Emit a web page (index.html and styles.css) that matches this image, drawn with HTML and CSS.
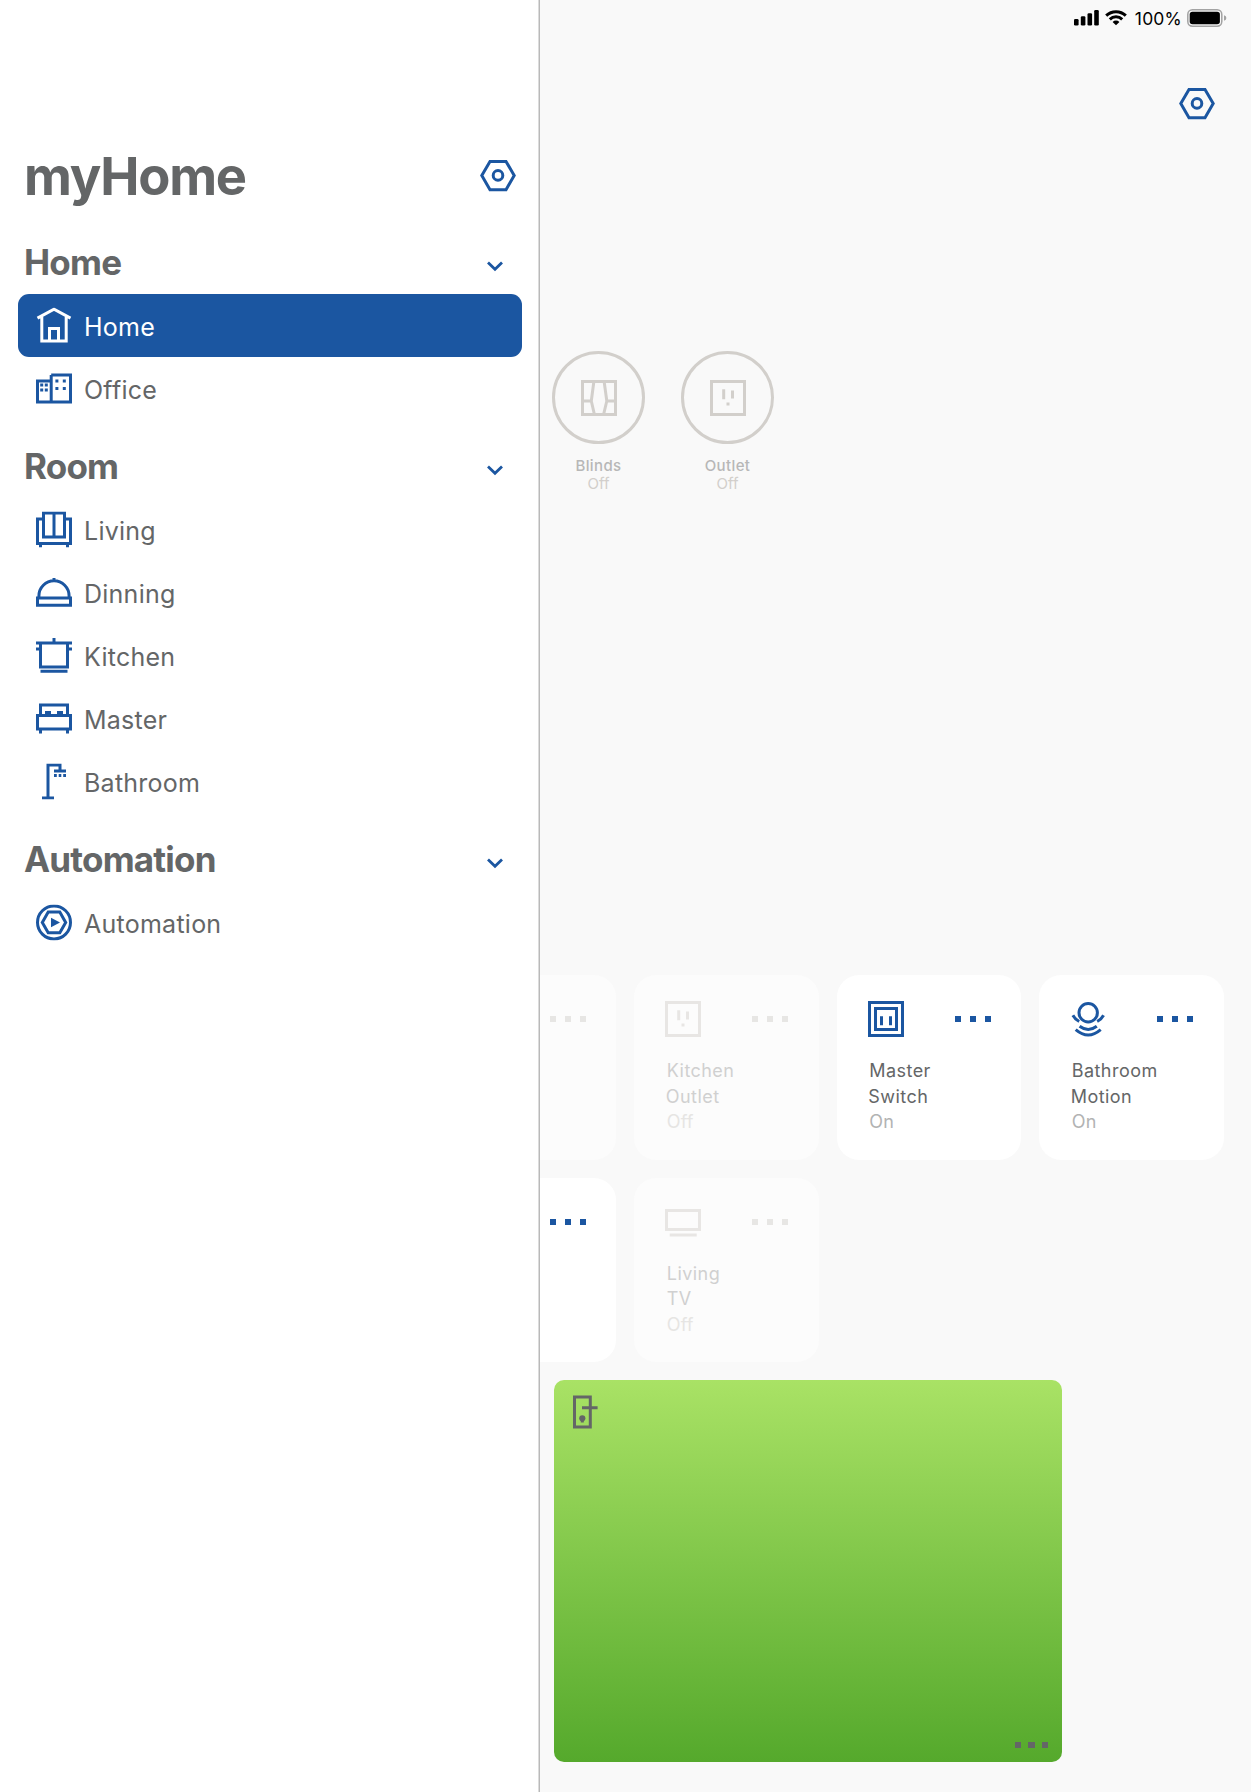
FILE: index.html
```html
<!DOCTYPE html>
<html lang="en">
<head>
<meta charset="utf-8">
<title>myHome</title>
<link rel="stylesheet" href="styles.css">
</head>
<body>
<svg class="sprite" aria-hidden="true">
  <symbol id="gear" viewBox="0 0 36 36"><path d="M1.8 18 10 4H26L34.2 18 26 32.3H10Z"/><circle cx="18" cy="18" r="4.8"/></symbol>
  <symbol id="chevron" viewBox="0 0 18 12"><path d="M2 2.5 9 9.2 16 2.5"/></symbol>
  <symbol id="outlet" viewBox="0 0 36 36"><path d="M1.5 1.5H34.5V34.5H1.5ZM13.7 9.3V19.3M22.5 10.5V18.5M16.5 24H19.5"/></symbol>
</svg>
<div class="app">
  <aside class="sidebar">
    <header class="brand">
      <h1>myHome</h1>
      <svg class="icon"><use href="#gear"/></svg>
    </header>

    <section>
      <div class="group"><h2>Home</h2><svg class="chevron"><use href="#chevron"/></svg></div>
      <ul>
        <li class="item active">
          <svg class="icon" viewBox="0 0 36 36"><path d="M1.5 10.7 18 1.9 34.5 10.7M5.8 9.5V33.5H30.2V9.5M13.5 33V21H22.5V33"/></svg><span>Home</span>
        </li>
        <li class="item">
          <svg class="icon" viewBox="0 0 36 36"><path d="M15.2 4.5H34.5V31.7H1.5V10.5H15.2M15.2 4.5V31.7"/><path class="fill" d="M4.2 13.2h3v3h-3zM8.8 13.2h3v3h-3zM4.2 18h3v3h-3zM8.8 18h3v3h-3zM19.4 9.2h3v3h-3zM26.8 9.2h3v3h-3zM19.4 16.5h3v3h-3zM26.8 16.5h3v3h-3z"/></svg><span>Office</span>
        </li>
      </ul>
    </section>

    <section>
      <div class="group"><h2>Room</h2><svg class="chevron"><use href="#chevron"/></svg></div>
      <ul>
        <li class="item">
          <svg class="icon" viewBox="0 0 36 36"><path d="M7.5 1.5H28.5V25.7H7.5ZM18 2V26M6 7.5H1.5V32.2H34.5V7.5H30M4.5 32V36M31.5 32V36"/></svg><span>Living</span>
        </li>
        <li class="item">
          <svg class="icon" viewBox="0 0 36 36"><path d="M1.5 23.5H34.5V30.8H1.5ZM2.9 23V21.5A15.1 15.1 0 0 1 33.1 21.5V23M18 3.5V7"/></svg><span>Dinning</span>
        </li>
        <li class="item">
          <svg class="icon" viewBox="0 0 36 36"><path d="M0 5.5H36M4.5 5.5V29.5H31.5V5.5M18 .7V5M0 11.7H4M32 11.7H36M4.5 33.8H31.5"/></svg><span>Kitchen</span>
        </li>
        <li class="item">
          <svg class="icon" viewBox="0 0 36 36"><path d="M4.5 14V4.5H31.5V14M1.5 15H34.5V28.7H1.5ZM4.5 29V33M31.5 29V33"/><path class="fill" d="M9 10.5h6v4H9zM21 10.5h6v4H21z"/></svg><span>Master</span>
        </li>
        <li class="item">
          <svg class="icon" viewBox="0 0 36 36"><path d="M12 34V1.7H24V7M18 7.7H30M18 12H20.8M22.7 12H25.3M27.2 12H30M6 34.5H18"/></svg><span>Bathroom</span>
        </li>
      </ul>
    </section>

    <section>
      <div class="group"><h2>Automation</h2><svg class="chevron"><use href="#chevron"/></svg></div>
      <ul>
        <li class="item">
          <svg class="icon" viewBox="0 0 36 36"><circle cx="18" cy="18" r="16.5"/><path d="M6.3 18 12.2 7.6H23.8L29.7 18 23.8 28.4H12.2Z"/><path class="fill" d="M15 13.3 24 18 15 22.8Z"/></svg><span>Automation</span>
        </li>
      </ul>
    </section>
  </aside>

  <main class="content">
    <div class="status">
      <svg width="26" height="16" viewBox="0 0 26 16"><rect x="0" y="9" width="4.6" height="6.5" rx="1.3"/><rect x="6.8" y="6.3" width="4.6" height="9.2" rx="1.3"/><rect x="13.5" y="3.2" width="4.6" height="12.3" rx="1.3"/><rect x="20.2" y="0" width="4.6" height="15.5" rx="1.3"/></svg>
      <svg class="wifi" width="22" height="16" viewBox="0 0 22 16"><path class="wave" d="M1.2 5.6A14.2 14.2 0 0 1 20.8 5.6M4.8 9.3A9 9 0 0 1 17.2 9.3"/><path d="M11 15.3 7.6 11.9A4.9 4.9 0 0 1 14.4 11.9Z"/></svg>
      <span>100%</span>
      <svg class="battery" width="40" height="18" viewBox="0 0 40 18"><rect class="shell" x=".8" y=".8" width="34" height="16.4" rx="4.6"/><rect x="2.7" y="2.7" width="30.2" height="12.6" rx="2.8"/><path class="nub" d="M37 6.2Q39.4 7 39.4 9T37 11.8Z"/></svg>
    </div>
    <div class="toolbar"><svg class="icon"><use href="#gear"/></svg></div>

    <div class="quick">
      <div class="accessory">
        <div class="ring"><svg class="icon" viewBox="0 0 36 36"><path d="M1.5 1.5H34.5V34.5H1.5ZM12.8 2 10.3 21 13.3 34M23.2 2 25.8 21 22.7 34M2 21H10.3M25.8 21H34"/></svg></div>
        <strong>Blinds</strong><span>Off</span>
      </div>
      <div class="accessory">
        <div class="ring"><svg class="icon"><use href="#outlet"/></svg></div>
        <strong>Outlet</strong><span>Off</span>
      </div>
    </div>

    <div class="cards">
      <article class="card off"><div class="top"><i class="dots"></i></div></article>
      <article class="card off">
        <div class="top"><svg class="icon"><use href="#outlet"/></svg><i class="dots"></i></div>
        <p>Kitchen</p><p class="kind">Outlet</p><p class="state">Off</p>
      </article>
      <article class="card">
        <div class="top"><svg class="icon" viewBox="0 0 36 36"><path d="M1.5 1.5H34.5V34.5H1.5ZM7.5 7.5H28.5V28.5H7.5ZM13.5 15.3V24.3M22.5 15.3V24.3"/></svg><i class="dots"></i></div>
        <p>Master</p><p class="kind">Switch</p><p class="state">On</p>
      </article>
      <article class="card">
        <div class="top"><svg class="icon" viewBox="0 0 36 36"><circle cx="18.2" cy="11.7" r="9.2"/><path d="M2.9 14.3Q5 18.3 9.2 20.5M33.5 14.3Q31.4 18.3 27.2 20.5M9.6 25.3Q18.2 31.7 26.8 25.3M5.7 28.7Q18.2 39.4 30.7 28.7"/></svg><i class="dots"></i></div>
        <p>Bathroom</p><p class="kind">Motion</p><p class="state">On</p>
      </article>
      <article class="card"><div class="top"><i class="dots"></i></div></article>
      <article class="card off">
        <div class="top"><svg class="icon" viewBox="0 0 36 36"><path d="M1.5 6.5H34.5V25.5H1.5ZM4.7 31H31.7"/></svg><i class="dots"></i></div>
        <p>Living</p><p class="kind tv">TV</p><p class="state">Off</p>
      </article>
    </div>

    <div class="door">
      <svg class="icon" viewBox="0 0 36 36"><path d="M4.5 3H20.3V33H4.5ZM12 13.7H27.6M12.3 24V28.6"/><circle class="fill" cx="12.3" cy="24.3" r="3.1"/></svg>
      <i class="dots"></i>
    </div>
  </main>
</div>
</body>
</html>
```
FILE: styles.css
```css
* { box-sizing: border-box; }

body {
  margin: 0;
  font-family: Inter, "Liberation Sans", sans-serif;
  color: #646667;
  background: #f9f9f9;
}

h1, h2, p, ul { margin: 0; padding: 0; }
ul { list-style: none; }

.sprite { position: absolute; width: 0; height: 0; }

.app {
  display: flex;
  width: 1251px;
  height: 1792px;
  overflow: hidden;
}

.icon {
  display: block;
  flex: none;
  width: 36px;
  height: 36px;
  fill: none;
  stroke: currentColor;
  stroke-width: 3;
  color: #1b56a1;
}
.icon .fill { fill: currentColor; stroke: none; }

/* Sidebar */
.sidebar {
  flex: none;
  width: 540px;
  padding: 135px 17px 0 18px;
  background: #fff;
  border-right: 1px solid #b9b9b9;
  box-shadow: inset -1px 0 #dcdcdc;
}

.brand {
  display: flex;
  justify-content: space-between;
  height: 81px;
  padding: 0 6px 0 6px;
}
.brand h1 {
  font-size: 52.5px;
  line-height: 83px;
  font-weight: 700;
  letter-spacing: -1.25px;
}
.brand .icon { margin-top: 22px; transform: translateY(0.4px); }

.group {
  display: flex;
  justify-content: space-between;
  height: 78px;
  padding: 0 18px 0 6px;
}
.group h2 {
  font-size: 35px;
  line-height: 42px;
  padding-top: 25px;
  font-weight: 700;
  letter-spacing: -0.8px;
}
.chevron {
  width: 18px;
  height: 12px;
  margin-top: 43.5px;
  fill: none;
  stroke: #1b56a1;
  stroke-width: 2.8;
}

.item {
  display: flex;
  align-items: center;
  gap: 12px;
  width: 504px;
  height: 63px;
  padding: 0 18px;
  border-radius: 11px;
  font-size: 25px;
  line-height: 32px;
  letter-spacing: 0.25px;
}
.item .icon { margin-bottom: 1px; transform: translateY(0.4px); }
.item span { padding-top: 3px; }
.item.active { background: #1b56a1; color: #fff; }
.item.active .icon { color: #fff; }

/* Content */
.content { flex: 1; min-width: 0; overflow: hidden; }

.status {
  display: flex;
  align-items: center;
  justify-content: flex-end;
  height: 36px;
  padding-right: 24px;
  color: #000;
  font-size: 17.5px;
  letter-spacing: 0.2px;
}
.status .wifi { margin: 0 7.5px 0 5.5px; }
.status .battery { margin-left: 5px; }
.wave { fill: none; stroke: #000; stroke-width: 3; }
.shell { fill: none; stroke: #a3a3a3; stroke-width: 1.5; }
.nub { fill: #a3a3a3; }

.toolbar {
  display: flex;
  justify-content: flex-end;
  padding: 49px 36px 0 0;
  height: 315px;
}
.toolbar .icon { transform: translateY(0.4px); }

.quick {
  display: flex;
  gap: 36px;
  height: 624px;
  padding-left: 12px;
}
.accessory {
  display: flex;
  flex-direction: column;
  align-items: center;
  width: 93px;
  font-size: 15px;
  line-height: 18px;
  color: #d2cfcb;
}
.accessory strong {
  margin-top: 13px;
  color: #b7b7b7;
  font-weight: 500;
  letter-spacing: 0.4px;
}
.accessory .icon { color: #d2cfcb; }
.ring {
  display: grid;
  place-items: center;
  width: 93px;
  height: 93px;
  border: 3px solid #d2cfcb;
  border-radius: 50%;
}

/* The first column slides under the sidebar */
.cards {
  display: grid;
  grid-template-columns: repeat(4, 184.5px);
  grid-auto-rows: 184.5px;
  gap: 18px;
  margin-left: -108.25px;
}
.card {
  padding: 26px 30.5px 0 31px;
  border-radius: 22px;
  background: #fff;
  font-size: 18px;
  line-height: 25.5px;
  letter-spacing: 0.45px;
}
.top {
  display: flex;
  align-items: center;
  justify-content: space-between;
  height: 36px;
  margin-bottom: 21px;
}
.card p { padding-left: 1.5px; }
.card .kind { padding-left: 0.5px; }
.card .tv { padding-left: 1.5px; }
.card .state { color: #b2b3b3; letter-spacing: 0.2px; }

.dots {
  display: block;
  width: 36px;
  height: 6px;
  margin-left: auto;
  background: repeating-linear-gradient(90deg, #1b56a1 0 6px, transparent 6px 15px);
}
.card.off { background: #fcfcfc; color: #d0d0d0; }
.card.off .icon { color: #e8e6e4; }
.card.off .state { color: #e6e5e3; }
.card.off .dots { background: repeating-linear-gradient(90deg, #e7e6e4 0 6px, transparent 6px 15px); }

.door {
  display: flex;
  flex-direction: column;
  justify-content: space-between;
  width: 508.5px;
  height: 381.5px;
  margin: 18px 0 0 13.5px;
  padding: 13.5px 14.5px 13.5px 16.5px;
  border-radius: 10px;
  background: linear-gradient(#a9e265, #55a92c);
}
.door .icon { color: #646667; }
.door .dots {
  width: 33px;
  background: repeating-linear-gradient(90deg, #646667 0 6px, transparent 6px 13.5px);
}
```
